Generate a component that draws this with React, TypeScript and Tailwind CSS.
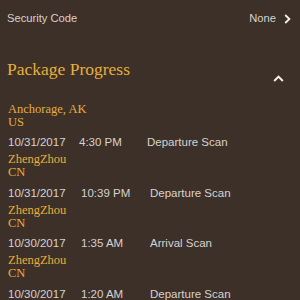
const scans = [
  { city: "Anchorage, AK", country: "US", date: "10/31/2017", time: "4:30 PM", desc: "Departure Scan", dw: "w-[71px]", tw: "w-[68px]" },
  { city: "ZhengZhou", country: "CN", date: "10/31/2017", time: "10:39 PM", desc: "Departure Scan", dw: "w-[73px]", tw: "w-[69px]" },
  { city: "ZhengZhou", country: "CN", date: "10/30/2017", time: "1:35 AM", desc: "Arrival Scan", dw: "w-[73px]", tw: "w-[69px]" },
  { city: "ZhengZhou", country: "CN", date: "10/30/2017", time: "1:20 AM", desc: "Departure Scan", dw: "w-[73px]", tw: "w-[69px]" },
];

export default function App() {
  return (
    <div className="w-[300px] h-[300px] overflow-hidden bg-[#3d3029] font-['Liberation_Sans',Arial,sans-serif]">
      {/* Security code row */}
      <div className="flex items-start justify-between pl-[7px] pr-[9px] pt-[10px] text-[11.2px] leading-[16px] text-[#d6d2ce]">
        <span>Security Code</span>
        <div className="flex items-center gap-[8px]">
          <span>None</span>
          <svg width="7" height="10" viewBox="0 0 7 10" className="mt-[1px]">
            <path d="M1.2 1 L5.4 5 L1.2 9" fill="none" stroke="#f4f1ee" strokeWidth="1.8" />
          </svg>
        </div>
      </div>

      {/* Section header */}
      <div className="flex items-start justify-between pl-[7px] pr-[16px] mt-[33px]">
        <h2 className="font-['Liberation_Serif',serif] text-[17.5px] leading-[20px] text-[#e7ae3b]">Package Progress</h2>
        <svg width="11" height="7" viewBox="0 0 11 7" className="mt-[16px]">
          <path d="M1.2 6 L5.5 1.6 L9.8 6" fill="none" stroke="#f4f1ee" strokeWidth="2" />
        </svg>
      </div>

      <div className="mt-[20.7px] pl-[8px]">
        {scans.map((s, i) => (
          <div key={i} className="pb-[3px]">
            <div className="font-['Liberation_Serif',serif] text-[12.5px] leading-[13px] text-[#e7ae3b]">
              <div>{s.city}</div>
              <div>{s.country}</div>
            </div>
            <div className="mt-[5.5px] flex text-[11.5px] leading-[16px] text-[#d6d2ce]">
              <span className={s.dw}>{s.date}</span>
              <span className={s.tw}>{s.time}</span>
              <span>{s.desc}</span>
            </div>
          </div>
        ))}
      </div>
    </div>
  );
}
